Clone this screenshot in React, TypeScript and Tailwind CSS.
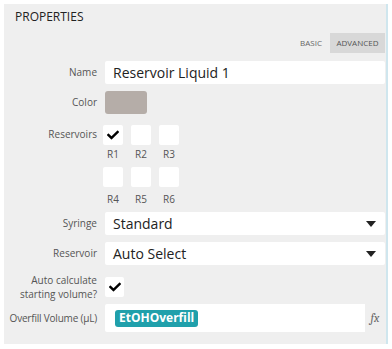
import { FaCheck } from "react-icons/fa";

const font = { fontFamily: '"Open Sans", "Noto Sans", sans-serif' };

function Label(props: { children: React.ReactNode; className?: string }) {
  return (
    <div
      className={`flex w-[101px] shrink-0 justify-end whitespace-nowrap pr-[8px] text-right text-[10px] leading-[13px] text-[#555] ${props.className ?? ""}`}
    >
      <div>{props.children}</div>
    </div>
  );
}

function Box(props: { checked?: boolean }) {
  return (
    <div className="flex h-[20px] w-[20px] items-center justify-center rounded-[2px] bg-white">
      {props.checked && <FaCheck className="h-[12px] w-[12px] text-black" />}
    </div>
  );
}

function Select(props: { value: string }) {
  return (
    <div className="flex h-[23px] flex-1 items-center justify-between rounded-[2px] bg-white pl-[8px] pr-[9px]">
      <span className="text-[14px] text-[#222]">{props.value}</span>
      <svg width="10" height="6" viewBox="0 0 10 6">
        <path d="M0 0 L10 0 L5 6 Z" fill="#222" />
      </svg>
    </div>
  );
}

export default function App() {
  const top = ["R1", "R2", "R3"];
  const bottom = ["R4", "R5", "R6"];
  return (
    <div className="h-[349px] w-[392px] bg-white pl-[4px] pt-[4px]" style={font}>
      <div className="h-[340px] w-[384px] border-r-2 border-r-[#cfe6ee] bg-[#efefef] pr-[1px]">
        <div className="pl-[11px] pt-[5px] text-[12px] leading-[16px] text-[#222]">PROPERTIES</div>

        <div className="mt-[8px] flex items-center justify-end">
          <span className="mr-[8px] text-[8px] text-[#666]">BASIC</span>
          <span className="flex h-[20px] w-[55px] items-center justify-center bg-[#d8d8d8] text-[8px] text-[#555]">
            ADVANCED
          </span>
        </div>

        <div className="mt-[8px] flex items-center">
          <Label>Name</Label>
          <div className="flex h-[23px] flex-1 items-center rounded-[2px] bg-white pl-[8px] text-[14px] text-[#222]">
            Reservoir Liquid 1
          </div>
        </div>

        <div className="mt-[7px] flex items-center">
          <Label>Color</Label>
          <div className="h-[23px] w-[42px] rounded-[3px] bg-[#b5ada8]" />
        </div>

        <div className="mt-[11px] flex items-start">
          <Label className="pt-[3px]">Reservoirs</Label>
          <div className="-ml-[2px] flex flex-col">
            <div className="flex gap-[8px]">
              {top.map((r, i) => (
                <div key={r} className="flex flex-col items-center">
                  <Box checked={i === 0} />
                  <span className="mt-[1px] text-[10px] leading-[16px] text-[#555]">{r}</span>
                </div>
              ))}
            </div>
            <div className="mt-[5px] flex gap-[8px]">
              {bottom.map((r) => (
                <div key={r} className="flex flex-col items-center">
                  <Box />
                  <span className="mt-[4px] text-[10px] leading-[16px] text-[#555]">{r}</span>
                </div>
              ))}
            </div>
          </div>
        </div>

        <div className="mt-[5px] flex items-center">
          <Label>Syringe</Label>
          <Select value="Standard" />
        </div>

        <div className="mt-[7px] flex items-center">
          <Label>Reservoir</Label>
          <Select value="Auto Select" />
        </div>

        <div className="mt-[8px] flex items-center">
          <Label className="leading-[14px]">
            Auto calculate
            <br />
            starting volume?
          </Label>
          <div className="flex h-[20px] w-[19px] items-center justify-center rounded-[2px] bg-white">
            <FaCheck className="h-[12px] w-[12px] text-black" />
          </div>
        </div>

        <div className="mt-[3px] flex items-center">
          <Label className="tracking-[-0.2px]">Overfill Volume (µL)</Label>
          <div className="flex h-[28px] flex-1 items-center rounded-[2px] bg-white pl-[10px]">
            <span className="flex h-[17px] items-center rounded-[3px] bg-[#20a0ab] px-[4px] text-[12px] font-bold text-white">
              EtOHOverfill
            </span>
            <span className="ml-auto flex h-[28px] w-[20px] items-center justify-center bg-[#efefef] font-serif text-[12px] italic text-[#666]">
              fx
            </span>
          </div>
        </div>
      </div>
    </div>
  );
}
